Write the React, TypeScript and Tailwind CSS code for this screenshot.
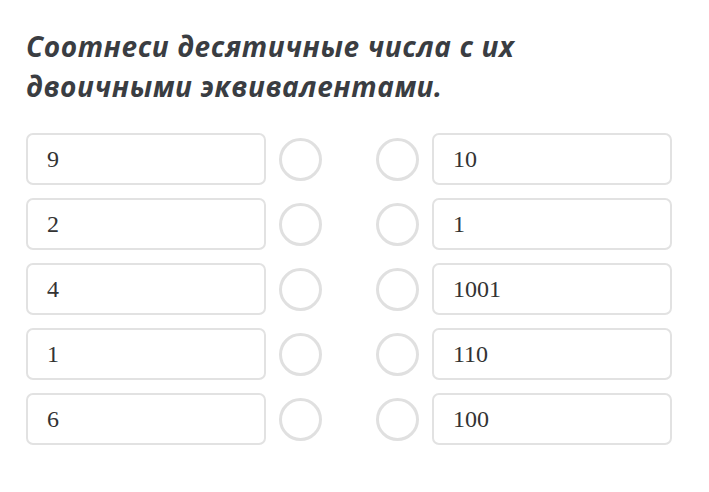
const left = ["9", "2", "4", "1", "6"];
const right = ["10", "1", "1001", "110", "100"];

const Circle = () => (
  <div className="w-[43px] h-[43px] rounded-full border-[3px] border-[#e0e0e0] bg-white shrink-0" />
);

const Box = ({ value }: { value: string }) => (
  <div className="w-[240px] h-[52px] rounded-[7px] border-2 border-[#e2e2e2] bg-white flex items-center px-[19px] pb-[1px] text-[24px] text-[#333] font-['Liberation_Serif',serif]">
    {value}
  </div>
);

export default function App() {
  return (
    <div className="w-[709px] h-[492px] bg-white pl-[26px] pt-[26px]">
      <h1 className="font-['Open_Sans',sans-serif] font-bold italic text-[28px] leading-[40px] text-[#3a3d42] tracking-[0.6px]">
        Соотнеси десятичные числа с их
        <br />
        двоичными эквивалентами.
      </h1>
      <div className="mt-[27px] flex flex-col gap-[13px]">
        {left.map((l, i) => (
          <div key={i} className="flex items-center">
            <Box value={l} />
            <div className="ml-[13px]">
              <Circle />
            </div>
            <div className="ml-[54px]">
              <Circle />
            </div>
            <div className="ml-[13px]">
              <Box value={right[i]} />
            </div>
          </div>
        ))}
      </div>
    </div>
  );
}
